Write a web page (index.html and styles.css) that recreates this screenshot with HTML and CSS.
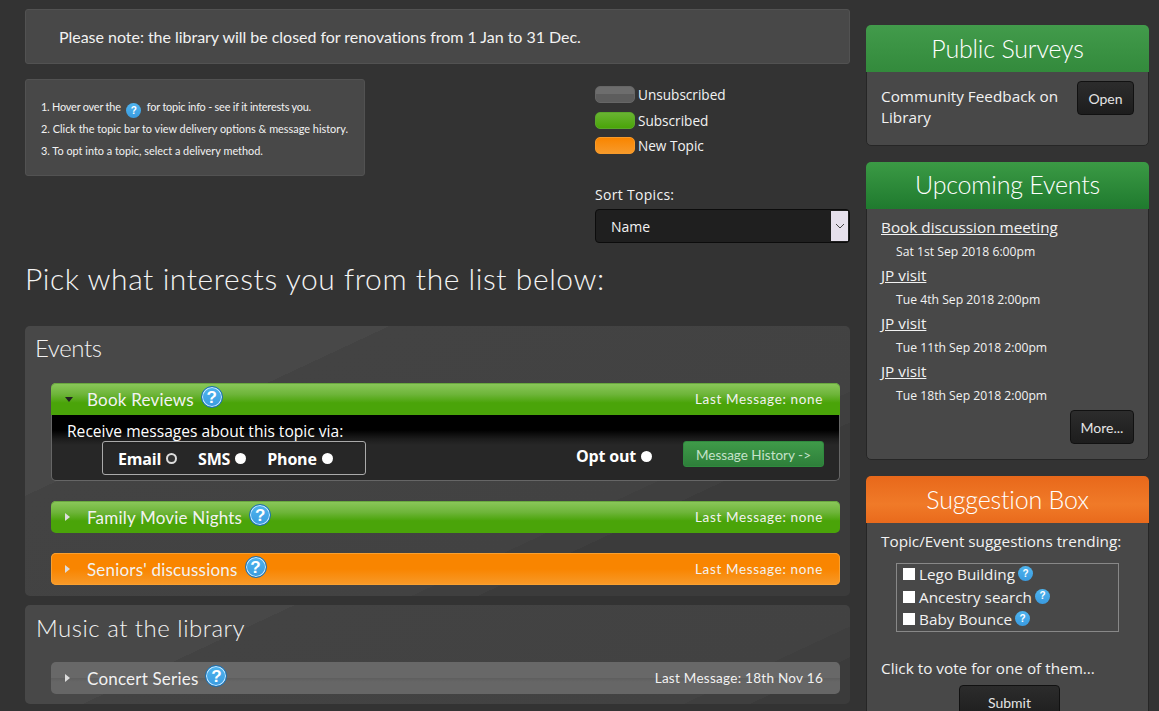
FILE: index.html
```html
<!DOCTYPE html>
<html lang="en">
<head>
<meta charset="utf-8">
<title>Library topics</title>
<link rel="stylesheet" href="styles.css">
</head>
<body>
<div class="page">
  <main class="main">
    <div class="box notice">Please note: the library will be closed for renovations from 1 Jan to 31 Dec.</div>
    <div class="intro">
      <div class="box steps">
        <p class="steps-first">1. Hover over the <span class="help help--tiny">?</span> for topic info - see if it interests you.</p>
        <p>2. Click the topic bar to view delivery options &amp; message history.</p>
        <p>3. To opt into a topic, select a delivery method.</p>
      </div>
      <div class="controls">
        <div class="legend"><span class="swatch swatch--grey"></span>Unsubscribed</div>
        <div class="legend"><span class="swatch swatch--green"></span>Subscribed</div>
        <div class="legend"><span class="swatch swatch--orange"></span>New Topic</div>
        <div class="sort-label">Sort Topics:</div>
        <div class="select">
          <span class="select-value">Name</span>
          <span class="select-arrow"><svg width="10" height="6" viewBox="0 0 10 6"><path d="M1 1l4 4 4-4" fill="none" stroke="#444" stroke-width="1"/></svg></span>
        </div>
      </div>
    </div>
    <h1 class="pick">Pick what interests you from the list below:</h1>

    <section class="section section--events">
      <h2 class="section-title">Events</h2>
      <div class="topic">
        <div class="bar bar--green bar--open">
          <span class="caret caret--down"></span>
          <span class="bar-name">Book Reviews</span><span class="help">?</span>
          <span class="bar-last">Last Message: none</span>
        </div>
        <div class="details">
          <div class="details-title">Receive messages about this topic via:</div>
          <div class="details-row">
            <div class="methods">
              <span class="method">Email <span class="radio radio--on"></span></span>
              <span class="method">SMS <span class="radio"></span></span>
              <span class="method">Phone <span class="radio"></span></span>
            </div>
            <span class="method optout">Opt out <span class="radio"></span></span>
            <button class="history">Message History -&gt;</button>
          </div>
        </div>
      </div>
      <div class="topic">
        <div class="bar bar--green">
          <span class="caret"></span>
          <span class="bar-name">Family Movie Nights</span><span class="help">?</span>
          <span class="bar-last">Last Message: none</span>
        </div>
      </div>
      <div class="topic">
        <div class="bar bar--orange">
          <span class="caret"></span>
          <span class="bar-name">Seniors' discussions</span><span class="help">?</span>
          <span class="bar-last">Last Message: none</span>
        </div>
      </div>
    </section>

    <section class="section section--music">
      <h2 class="section-title section-title--music">Music at the library</h2>
      <div class="topic">
        <div class="bar bar--grey">
          <span class="caret"></span>
          <span class="bar-name">Concert Series</span><span class="help">?</span>
          <span class="bar-last">Last Message: 18th Nov 16</span>
        </div>
      </div>
    </section>
  </main>

  <aside class="side">
    <div class="card">
      <h3 class="card-head card-head--surveys">Public Surveys</h3>
      <div class="card-body survey">
        <span class="survey-name">Community Feedback on Library</span>
        <button class="btn btn--open">Open</button>
      </div>
    </div>
    <div class="card">
      <h3 class="card-head card-head--events">Upcoming Events</h3>
      <div class="card-body events">
        <a class="event-link" href="#">Book discussion meeting</a>
        <div class="event-date">Sat 1st Sep 2018 6:00pm</div>
        <a class="event-link" href="#">JP visit</a>
        <div class="event-date">Tue 4th Sep 2018 2:00pm</div>
        <a class="event-link" href="#">JP visit</a>
        <div class="event-date">Tue 11th Sep 2018 2:00pm</div>
        <a class="event-link" href="#">JP visit</a>
        <div class="event-date">Tue 18th Sep 2018 2:00pm</div>
        <div class="more-row"><button class="btn btn--more">More...</button></div>
      </div>
    </div>
    <div class="card">
      <h3 class="card-head card-head--suggest">Suggestion Box</h3>
      <div class="card-body suggest">
        <div class="suggest-title">Topic/Event suggestions trending:</div>
        <div class="options">
          <div class="option"><span class="check"></span>Lego Building<span class="help help--small">?</span></div>
          <div class="option"><span class="check"></span>Ancestry search<span class="help help--small">?</span></div>
          <div class="option"><span class="check"></span>Baby Bounce<span class="help help--small">?</span></div>
        </div>
        <div class="vote">Click to vote for one of them...</div>
        <div class="submit-row"><button class="btn btn--submit">Submit</button></div>
      </div>
    </div>
  </aside>
</div>
</body>
</html>
```

FILE: styles.css
```css
* { box-sizing: border-box; }
html, body { margin: 0; height: 711px; overflow: hidden; }
body {
  background: #333;
  color: #f2f2f2;
  font-family: "Open Sans", "Noto Sans", sans-serif;
  font-size: 16px;
}
h1, h2, h3, p { margin: 0; font-weight: 300; }
button { font: inherit; cursor: pointer; }

.page { display: flex; gap: 16px; padding: 9px 9px 0 25px; height: 711px; overflow: hidden; }
.main { width: 825px; flex: none; }
.side { width: 283px; flex: none; padding-top: 16px; }

.box {
  background: #484848;
  border: 1px solid #525252;
  border-radius: 3px;
}
.notice {
  height: 55px;
  padding: 0 33px;
  font-family: Lato, sans-serif;
  font-size: 16px;
  line-height: 54px;
  letter-spacing: -.03px;
}
.intro { display: flex; justify-content: space-between; margin-top: 15px; height: 179px; }
.steps {
  width: 340px;
  height: 97px;
  padding: 15.6px 15px 0;
  font-family: Lato, sans-serif;
  font-size: 10.9px;
  line-height: 22px;
}
.steps p { font-weight: 400; white-space: nowrap; }
.steps .steps-first { letter-spacing: -.2px; }

.controls { width: 255px; padding-top: 3px; font-size: 13.6px; }
.legend { display: flex; align-items: center; height: 25.5px; }
.swatch { width: 40px; height: 17px; border-radius: 5px; margin-right: 3px; flex: none; }
.swatch--grey { background: linear-gradient(#6d6d6d 50%, #5d5d5d 50%); border: 1px solid #666; }
.swatch--green { background: linear-gradient(#69b332, #4aa409); border: 1px solid #5aa82a; }
.swatch--orange { background: linear-gradient(#f98500, #f79a2a); border: 1px solid #f79a2a; }
.sort-label { margin-top: 24px; line-height: 24px; font-size: 14px; letter-spacing: .3px; }
.select {
  display: flex;
  margin-top: 2px;
  height: 34px;
  border: 1px solid #0c0c0c;
  border-radius: 4px;
  background: #1f1f1f;
  overflow: hidden;
  font-size: 14px;
}
.select-value { flex: 1; padding-left: 15px; line-height: 33px; }
.select-arrow {
  width: 17px;
  margin: 1px;
  display: flex;
  align-items: center;
  justify-content: center;
  background: #e6e0ec;
}

.pick {
  font-family: Lato, sans-serif;
  font-size: 30px;
  font-weight: 300;
  line-height: 40px;
  letter-spacing: .56px;
  color: #f4f4f4;
  margin-bottom: 28px;
}

.section {
  border-radius: 5px;
  padding: 0 10px 10px 26px;
  margin-bottom: 9px;
}
.section--events {
  height: 270px;
  background: linear-gradient(155deg, #484848 154px, #434343 154px, #424242 408px, #3f3f3f 408px, #3f3f3f 436px, #3b3b3b 436px);
}
.section--music {
  height: 99px;
  background: linear-gradient(155deg, #484848 114px, #434343 114px, #424242 368px, #3f3f3f 368px, #3f3f3f 396px, #3b3b3b 396px);
}
.section-title {
  margin-left: -16px;
  height: 57px;
  font-family: Lato, sans-serif;
  font-size: 24px;
  line-height: 43px;
  letter-spacing: -.4px;
}
.section-title--music { letter-spacing: .5px; margin-left: -15px; line-height: 45px; }

.topic { margin-bottom: 20px; }
.bar {
  display: flex;
  align-items: center;
  height: 32px;
  border-radius: 5px;
  padding: 0 17px 0 14px;
  font-family: Lato, sans-serif;
}
.bar--green {
  background: linear-gradient(#8cc85c, #6eb53a 35%, #4aa409 62%, #4aa409);
  box-shadow: inset 0 1px 0 #69a83f;
}
.bar--open { border-radius: 5px 5px 0 0; }
.bar--orange { background: linear-gradient(#f98500, #f98500 50%, #f79a2a); box-shadow: inset 0 0 0 1px #f9a030; }
.bar--grey { background: linear-gradient(#686868 50%, #5e5e5e 50%, #666 62%); }
.caret { width: 0; height: 0; margin-right: 17px; border-style: solid; border-width: 4px 0 4px 5px; border-color: transparent transparent transparent #ddd; }
.caret--down { border-width: 5px 4px 0; border-color: #222 transparent transparent; margin-right: 14px; }
.bar-name { margin-top: 1px; font-size: 17px; letter-spacing: .2px; }
.bar-last { margin-left: auto; font-size: 13.5px; letter-spacing: .65px; }
.bar--grey .bar-last { letter-spacing: .28px; }

.help {
  display: inline-flex;
  align-items: center;
  justify-content: center;
  width: 22px;
  height: 22px;
  margin: -4px 0 0 7px;
  border-radius: 50%;
  border: 1.5px solid #1a6fb0;
  box-shadow: inset 0 0 0 1px #cfeaff;
  background: linear-gradient(#4fb4ee, #3a9be0);
  color: #fff;
  font-family: "Liberation Sans", sans-serif;
  font-size: 17px;
  font-weight: 700;
  line-height: 1;
  letter-spacing: 0;
}
.help--tiny {
  width: 15px;
  height: 15px;
  margin: 0 3px 0 3px;
  font-size: 10px;
  vertical-align: -3px;
  border-width: 0;
  box-shadow: none;
}
.help--small {
  width: 15px;
  height: 15px;
  margin: -1px 0 0 3px;
  font-size: 10px;
  border: 0;
  box-shadow: none;
}

.details {
  height: 66px;
  border: 1px solid #666;
  border-top: 0;
  border-radius: 0 0 5px 5px;
  background: linear-gradient(#000 0, #000 15px, #1c1c1c 24px, #272727 30px);
  padding: 5px 15px 0;
}
.details-title { line-height: 22px; font-size: 15.6px; color: #fff; }
.details-row { display: flex; align-items: flex-start; margin-top: -1px; }
.methods {
  display: flex;
  gap: 21px;
  margin-left: 35px;
  height: 34px;
  width: 264px;
  padding: 1px 0 0 15px;
  align-items: center;
  border: 1px solid #aaa;
  border-radius: 3px;
}
.method { display: inline-flex; align-items: center; gap: 5px; font-weight: 700; color: #fff; font-size: 16px; letter-spacing: -.2px; }
.radio { width: 11px; height: 11px; border-radius: 50%; background: #fff; }
.radio--on { background: #333; border: 2px solid #ddd; }
.optout { margin: 4px 0 0 auto; }
.history {
  margin-left: 31px;
  width: 141px;
  height: 26px;
  border: 1px solid #2f8a3e;
  border-radius: 3px;
  background: linear-gradient(#3f9a49, #2e7f3a);
  color: #c4e2c9;
  font-family: Lato, sans-serif;
  font-size: 13.5px;
  padding: 1px 0 0;
}

.card {
  background: #484848;
  border: 1px solid #262626;
  border-radius: 5px;
  margin-bottom: 16px;
}
.card-head {
  margin: -1px;
  height: 47px;
  border-radius: 5px 5px 0 0;
  text-align: center;
  font-family: Lato, sans-serif;
  font-size: 25px;
  font-weight: 300;
  line-height: 47px;
  letter-spacing: -.2px;
  color: #fff;
}
.card-head--surveys { background: linear-gradient(#429b4b, #338a3c); }
.card-head--events { background: linear-gradient(#3b9a45, #1f7a2e); line-height: 45px; }
.card-head--suggest { background: linear-gradient(#e8681a, #f07a28 60%, #e96a1c); line-height: 46px; }
.card-body { padding: 0 14px; }
.survey { display: flex; justify-content: space-between; height: 74px; padding-top: 15px; font-size: 15.3px; line-height: 21px; }
.survey-name { width: 190px; }
.btn {
  border: 1px solid #111;
  border-radius: 4px;
  background: linear-gradient(#2c2c2c, #1d1d1d);
  color: #e4e4e4;
  font-family: Lato, sans-serif;
  font-size: 14px;
  padding: 0;
}
.btn--open { width: 57px; height: 34px; flex: none; margin-top: -5px; }
.events { height: 251px; padding-top: 7px; font-size: 15.3px; }
.event-link { display: block; width: fit-content; color: #f2f2f2; text-decoration: underline; line-height: 25px; }
.event-date { font-size: 12.2px; line-height: 22px; padding-left: 15px; margin-bottom: 1px; position: relative; top: .5px; }
.more-row { display: flex; justify-content: flex-end; margin-top: 4px; }
.btn--more { width: 64px; height: 34px; }
.suggest { height: 260px; padding-top: 8px; font-size: 15.3px; }
.suggest-title { line-height: 22px; }
.options { margin: 11px 0 0 15px; width: 223px; height: 69px; border: 1px solid #888; padding: 0 6px; }
.option { display: flex; align-items: center; height: 22.5px; }
.option:first-child { margin-top: -1px; }
.check { width: 12px; height: 12px; margin-right: 4px; background: #fff; }
.vote { margin-top: 25px; line-height: 22px; }
.submit-row { display: flex; justify-content: center; margin: 6px 0 0 4px; }
.btn--submit { width: 101px; height: 34px; }
```
